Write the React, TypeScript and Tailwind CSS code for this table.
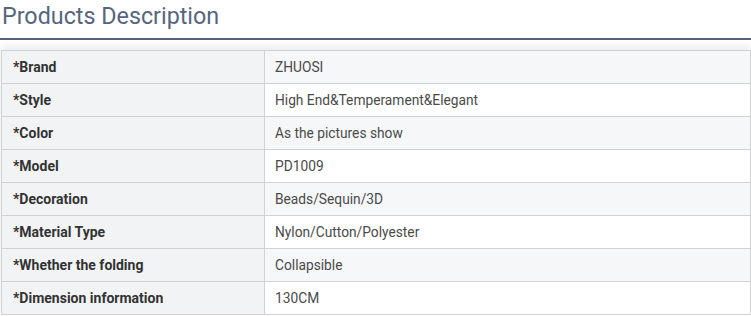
const rows: [string, string][] = [
  ["*Brand", "ZHUOSI"],
  ["*Style", "High End&Temperament&Elegant"],
  ["*Color", "As the pictures show"],
  ["*Model", "PD1009"],
  ["*Decoration", "Beads/Sequin/3D"],
  ["*Material Type", "Nylon/Cutton/Polyester"],
  ["*Whether the folding", "Collapsible"],
  ["*Dimension information", "130CM"],
];

const App = () => {
  return (
    <div className="w-[751px] h-[316px] bg-white overflow-hidden font-['Roboto',sans-serif]">
      <h2 className="pl-[2px] pt-[1px] h-[38px] text-[23.3px] leading-[30px] text-[#56657d]">
        Products Description
      </h2>
      <div className="h-[2px] bg-[#56647a]" />
      <div className="mt-[10px] ml-[1px] w-[750px] border-x border-b border-[#d2d2d2] shadow-[0_-4px_8px_rgba(0,0,0,0.08)]">
        {rows.map(([label, value], i) => (
          <div key={label} className="flex h-[33px] border-t border-[#d2d2d2]">
            <div className="w-[263px] shrink-0 bg-[#f2f3f5] border-r border-[#d2d2d2] pl-[11px] flex items-center text-[14px] font-bold text-[#333]">
              {label}
            </div>
            <div
              className={`flex-1 pl-[10px] flex items-center text-[13.75px] text-[#4a4a4a] ${
                i % 2 === 0 ? "bg-[#f6f7f9]" : "bg-white"
              }`}
            >
              {value}
            </div>
          </div>
        ))}
      </div>
    </div>
  );
};

export default App;
